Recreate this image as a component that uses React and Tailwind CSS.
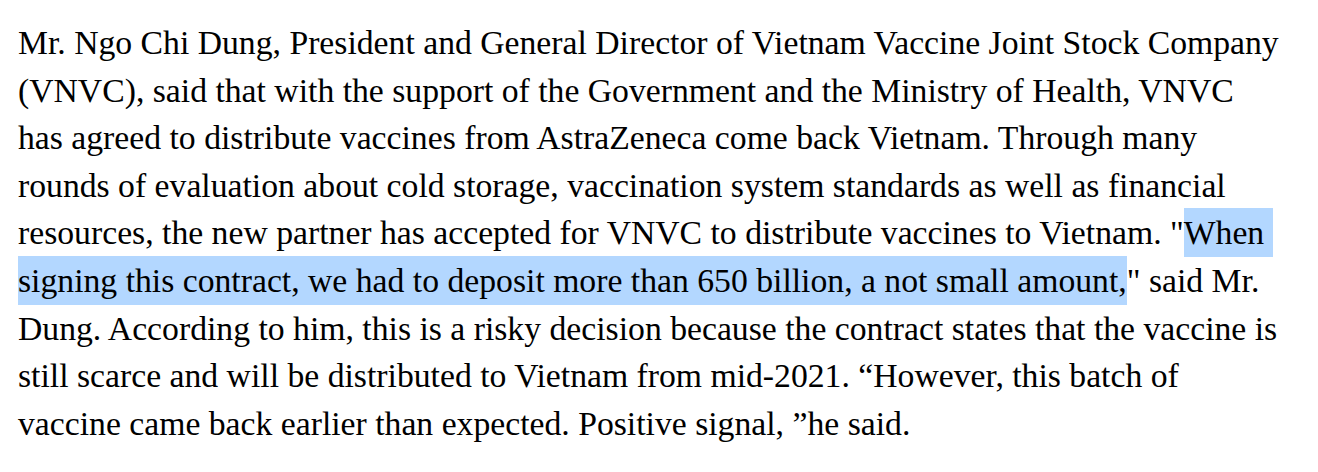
import React from 'react';

const lines = [
  'Mr. Ngo Chi Dung, President and General Director of Vietnam Vaccine Joint Stock Company',
  '(VNVC), said that with the support of the Government and the Ministry of Health, VNVC',
  'has agreed to distribute vaccines from AstraZeneca come back Vietnam. Through many',
  'rounds of evaluation about cold storage, vaccination system standards as well as financial',
];

const App = () => {
  return (
    <div className="bg-white w-[1318px] h-[472px] overflow-hidden">
      <p className="pl-[18px] pt-[19px] text-[33.7px] leading-[47.6px] text-black font-['Liberation_Serif','Times_New_Roman',serif] whitespace-nowrap">
        {lines.map((line) => (
          <React.Fragment key={line}>
            {line}
            <br />
          </React.Fragment>
        ))}
        resources, the new partner has accepted for VNVC to distribute vaccines to Vietnam. "
        <span className="bg-[#b3d7ff] py-[6px]">
          When{'\u00a0'}
          <br />
          signing this contract, we had to deposit more than 650 billion, a not small amount,
        </span>
        " said Mr.
        <br />
        Dung. According to him, this is a risky decision because the contract states that the vaccine is
        <br />
        still scarce and will be distributed to Vietnam from mid-2021. “However, this batch of
        <br />
        vaccine came back earlier than expected. Positive signal, ”he said.
      </p>
    </div>
  );
};

export default App;
